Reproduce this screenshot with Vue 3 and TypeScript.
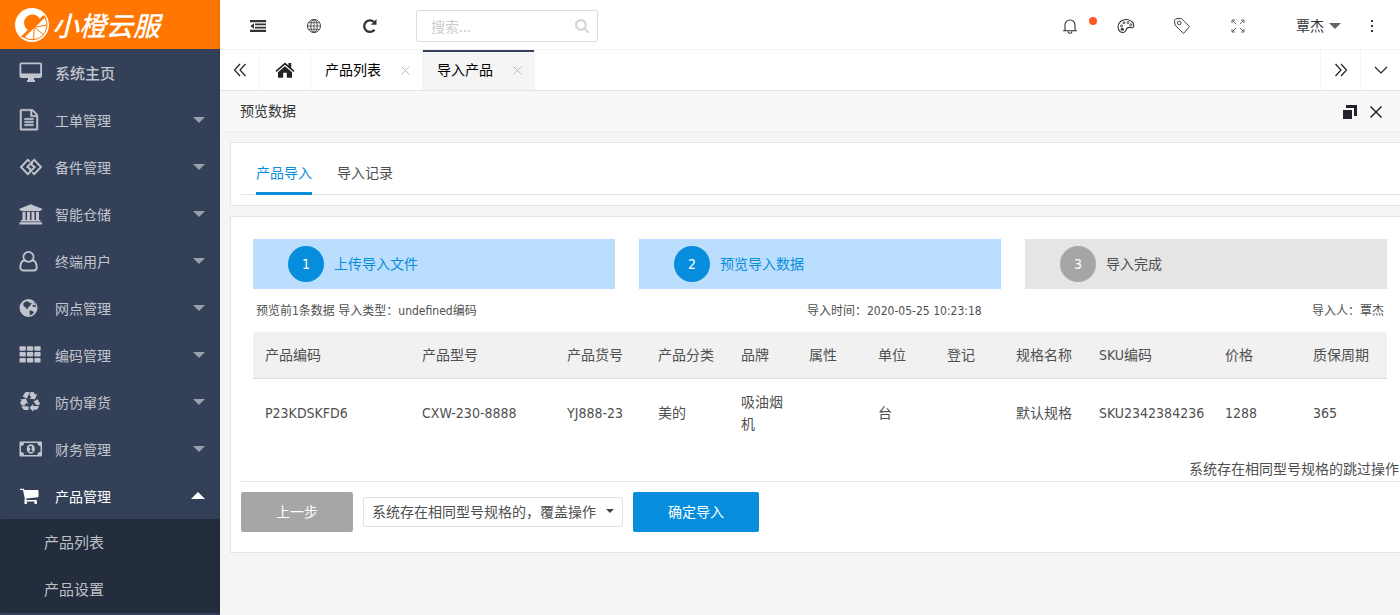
<script setup lang="ts">
import { ref } from 'vue'

interface MenuItem { label: string; icon: string; active?: boolean; plain?: boolean }
interface Column { title: string; width: number; value: string }

const menu: MenuItem[] = [
  { label: '系统主页', icon: 'desktop', plain: true },
  { label: '工单管理', icon: 'file' },
  { label: '备件管理', icon: 'link' },
  { label: '智能仓储', icon: 'bank' },
  { label: '终端用户', icon: 'user' },
  { label: '网点管理', icon: 'globe' },
  { label: '编码管理', icon: 'grid' },
  { label: '防伪窜货', icon: 'recycle' },
  { label: '财务管理', icon: 'money' },
  { label: '产品管理', icon: 'cart', active: true },
]
const submenu = ['产品列表', '产品设置']

const steps = [
  { label: '上传导入文件', done: true },
  { label: '预览导入数据', done: true },
  { label: '导入完成', done: false },
]

const columns: Column[] = [
  { title: '产品编码', width: 157, value: 'P23KDSKFD6' },
  { title: '产品型号', width: 145, value: 'CXW-230-8888' },
  { title: '产品货号', width: 91, value: 'YJ888-23' },
  { title: '产品分类', width: 83, value: '美的' },
  { title: '品牌', width: 68, value: '吸油烟机' },
  { title: '属性', width: 69, value: '' },
  { title: '单位', width: 69, value: '台' },
  { title: '登记', width: 69, value: '' },
  { title: '规格名称', width: 83, value: '默认规格' },
  { title: 'SKU编码', width: 126, value: 'SKU2342384236' },
  { title: '价格', width: 88, value: '1288' },
  { title: '质保周期', width: 86, value: '365' },
]
const totalWidth = columns.reduce((sum, c) => sum + c.width, 0)

const keyword = ref('')
const mode = ref('cover')
</script>

<template>
  <div class="app">
    <aside class="sidebar">
      <a class="logo" href="#" aria-label="小橙云服">
        <svg class="logo-mark" viewBox="0 0 36 36" aria-hidden="true">
          <circle cx="18" cy="18" r="17" fill="#fff" />
          <circle cx="18.500" cy="16" r="8.500" fill="#ff7701" />
          <path d="M29.500 8L32.500 11L11.500 31.500L7 29.500Z" fill="#ff7701" />
          <path d="M30.800 10.200A14.800 14.800 0 0 1 10 30.300Z" fill="#fff" stroke="#ff7701" stroke-width="1" />
          <path d="M20.300 20.200L33 18M20.300 20.200L30 28M20.300 20.200L19.500 33" stroke="#ff7701" stroke-width="1" />
        </svg>
        <span class="logo-text">小橙云服</span>
      </a>
      <nav>
        <ul class="menu">
          <li v-for="item in menu" :key="item.label">
            <a href="#" class="menu-link" :class="{ active: item.active, home: item.plain }">
              <svg class="menu-icon" viewBox="0 0 26 24" fill="currentColor" aria-hidden="true">
                <path v-if="item.icon === 'desktop'" fill-rule="evenodd" d="M3.500 1.500H22a2 2 0 0 1 2 2V15a2 2 0 0 1-2 2H16V19h1V21H9V19h1V17H3.500a2 2 0 0 1-2-2V3.500a2 2 0 0 1 2-2ZM3.300 3.200V12.500H22.200V3.200Z" />
                <g v-else-if="item.icon === 'file'" transform="translate(.5 1.300) scale(.0117)" stroke="currentColor" stroke-width="40">
                  <path d="M1596 380q28 28 48 76t20 88v1152q0 40-28 68t-68 28h-1344q-40 0-68-28t-28-68v-1600q0-40 28-68t68-28h896q40 0 88 20t76 48zm-444-244v376h376q-10-29-22-41l-313-313q-12-12-41-22zm384 1528v-1024h-416q-40 0-68-28t-28-68v-416h-768v1536h1280zm-1024-864q0-14 9-23t23-9h704q14 0 23 9t9 23v64q0 14-9 23t-23 9h-704q-14 0-23-9t-9-23v-64zm736 224q14 0 23 9t9 23v64q0 14-9 23t-23 9h-704q-14 0-23-9t-9-23v-64q0-14 9-23t23-9h704zm0 256q14 0 23 9t9 23v64q0 14-9 23t-23 9h-704q-14 0-23-9t-9-23v-64q0-14 9-23t23-9h704z" />
                </g>
                <g v-else-if="item.icon === 'link'" fill="none" stroke="currentColor" stroke-width="1.900">
                  <path d="M11.800 6.700L9.800 4.900L3 12L9.800 19.100L12.200 16.700V14L9.300 11.800L14.300 7" />
                  <path d="M14.200 17.300L16.200 19.100L23 12L16.200 4.900L13.800 7.300V10L16.700 12.200L12 16.800" />
                </g>
                <g v-else-if="item.icon === 'bank'">
                  <path d="M12.800 2.300L24 6.700V8.200H22.500V9H3V8.200H1.500V6.700Z" />
                  <path d="M4.500 9.700H7.500V18H9V9.700H12V18H13.500V9.700H16.500V18H18V9.700H21V18H22.500V19.500H3V18H4.500ZM1.500 20.300H24V22.500H1.500Z" />
                </g>
                <g v-else-if="item.icon === 'user'" fill="none" stroke="currentColor" stroke-width="1.900">
                  <path d="M6.800 11.300A5 5 0 1 1 14.200 11.300A5.300 5.300 0 0 1 6.800 11.300C3.500 11.800 2.300 14.500 2.300 18.500A3 3 0 0 0 5.300 21.500H15.700A3 3 0 0 0 18.700 18.500C18.700 14.500 17.500 11.800 14.200 11.300" />
                </g>
                <path v-else-if="item.icon === 'globe'" fill-rule="evenodd" d="M10.500 3A9 9 0 1 1 10.500 21A9 9 0 0 1 10.500 3ZM9.500 5L6.500 6.300L5.300 7.500L5.600 10L7.200 11.300L8.600 13L10.500 13.300L9.300 11.800L11.300 10.700L12.600 9L13.700 7.600L12.800 6.500L11.800 7.300L11 6.200ZM12.200 14.500L11.200 15.500L11.800 17L11.500 19.200L14 18.400L16 16.400L14.500 15.100ZM14.800 5.500L17.400 8.500L16.700 9.600L15.500 8.700L14.300 9.500L15 10.800L17.800 11L17.800 9L16.500 6.500Z" />
                <g v-else-if="item.icon === 'grid'">
                  <template v-for="row in 3" :key="row">
                    <rect v-for="col in 3" :key="col" :x="1.5 + (col - 1) * 7.4" :y="3.3 + (row - 1) * 5.8" width="6.300" height="4.500" rx="1" />
                  </template>
                </g>
                <g v-else-if="item.icon === 'recycle'">
                  <path d="M8 2H11.800L10 6.300L8.800 8.800L4.700 6.500L6.700 3Z" />
                  <path d="M12.800 2H15.500L17.500 4.700L19.500 3.600L17 9.200L11.200 8.700L13.200 7.500L11.300 4.500Z" />
                  <path d="M15.500 11.500L19.600 9.200L22 13.500L21.200 15L18.300 14.900Z" />
                  <path d="M11.500 17.700L15.200 13.800V15.900H21.200L19 19.800H15.200V21.800Z" />
                  <path d="M2 9.500L7.900 8.800L10.200 14L8.200 12.900L6.300 15.800L3.700 15.300L2 12.500L3.700 10.600Z" />
                  <path d="M3.300 16.300H10.500V20H5.800Z" />
                </g>
                <path v-else-if="item.icon === 'money'" fill-rule="evenodd" d="M2.500 4.500H23a1 1 0 0 1 1 1V18.500a1 1 0 0 1-1 1H2.500a1 1 0 0 1-1-1V5.500a1 1 0 0 1 1-1ZM6 6A3 3 0 0 1 3 9V15A3 3 0 0 1 6 18H19.500A3 3 0 0 1 22.500 15V9A3 3 0 0 1 19.500 6ZM12.800 7.300C15.300 7.300 16.800 9.300 16.800 12S15.300 16.700 12.800 16.700S8.800 14.700 8.800 12S10.300 7.300 12.800 7.300ZM12.300 9L10.800 10.300L11.500 11.100L12.200 10.600V13.800H11.200V15H14.700V13.800H13.700V9Z" />
                <g v-else transform="translate(1.300 1.800) scale(.0111)">
                  <path d="M704 1536q0 52-38 90t-90 38-90-38-38-90 38-90 90-38 90 38 38 90zm896 0q0 52-38 90t-90 38-90-38-38-90 38-90 90-38 90 38 38 90zm128-1088v512q0 24-16.500 42.500t-40.500 21.500l-1044 122q13 60 13 70 0 16-24 64h920q26 0 45 19t19 45-19 45-45 19h-1024q-26 0-45-19t-19-45q0-11 8-31.500t16-36 21.500-40 15.500-29.500l-177-823h-204q-26 0-45-19t-19-45 19-45 45-19h256q16 0 28.500 6.500t19.500 15.500 13 24.500 8 26 5.500 29.500 4.500 26h1201q26 0 45 19t19 45z" />
                </g>
              </svg>
              <span class="menu-label">{{ item.label }}</span>
              <i v-if="!item.plain" class="caret" :class="{ up: item.active }"></i>
            </a>
            <ul v-if="item.active" class="submenu">
              <li v-for="sub in submenu" :key="sub"><a href="#">{{ sub }}</a></li>
            </ul>
          </li>
        </ul>
      </nav>
    </aside>

    <div class="main">
      <header class="topbar">
        <button class="tool" type="button" aria-label="收起菜单">
          <svg width="18" height="16" viewBox="0 0 18 16" fill="#333"><path d="M1 2H17V4.200H1ZM6 5.500H17V7.300H6ZM6 8.700H17V10.500H6ZM1 11.800H17V14H1ZM5 5.200V10.800L1.300 8Z" /></svg>
        </button>
        <button class="tool" type="button" aria-label="网站">
          <svg width="16" height="16" viewBox="0 0 16 16" fill="none" stroke="#444"><circle cx="8" cy="8" r="6.500" /><ellipse cx="8" cy="8" rx="3.200" ry="6.500" /><path d="M8 1.500V14.500M1.500 8H14.500M2.500 4.700H13.500M2.500 11.300H13.500" stroke-width=".8" /></svg>
        </button>
        <button class="tool" type="button" aria-label="刷新">
          <svg width="16" height="16" viewBox="0 0 16 16"><path d="M12.500 11.800A5.800 5.800 0 1 1 11.800 3.800" fill="none" stroke="#333" stroke-width="2.300" /><path d="M14.500 1V6.800H8.800Z" fill="#333" /></svg>
        </button>
        <label class="search">
          <input v-model="keyword" type="text" placeholder="搜索..." aria-label="搜索" />
          <svg width="14" height="14" viewBox="64 128 1664 1664" fill="#d5d5d5" aria-hidden="true"><path d="M1216 832q0-185-131.500-316.500t-316.500-131.500-316.500 131.500-131.500 316.500 131.500 316.500 316.500 131.500 316.500-131.500 131.500-316.500zm512 832q0 52-38 90t-90 38q-54 0-90-38l-343-342q-179 124-399 124-143 0-273.500-55.500t-225-150-150-225-55.500-273.500 55.500-273.500 150-225 225-150 273.500-55.500 273.500 55.500 225 150 150 225 55.500 273.500q0 220-124 399l343 343q37 37 37 90z" /></svg>
        </label>
        <div class="topbar-right">
          <button class="tool" type="button" aria-label="消息">
            <svg width="16" height="16" viewBox="0 0 16 16" fill="none" stroke="#333"><path d="M3 12.500V7A5 5 0 0 1 13 7V12.500M1 12.700H15M6 13.500A2 1.800 0 0 0 10 13.500" stroke-width="1.100" /></svg>
            <i class="dot"></i>
          </button>
          <button class="tool" type="button" aria-label="主题">
            <svg width="18" height="16" viewBox="0 0 18 16" fill="none" stroke="#333"><path d="M3.300 13.800C0 11 .3 6 3.800 3.300C7.500.5 13 1.200 15.500 4.200C17.500 6.800 17 10 15 9.800C13 9.200 11.500 9 10.300 10C9 11.300 9 14.300 6.500 14.500C5 14.600 4 14.300 3.300 13.800Z" stroke-width="1.100" /><g stroke-width=".9"><circle cx="4.500" cy="8" r="1" /><circle cx="7" cy="4.800" r="1" /><circle cx="11" cy="4.500" r="1" /><circle cx="13.800" cy="6.900" r="1" /></g><circle cx="5.300" cy="11.300" r="1.500" fill="#333" stroke="none" /></svg>
          </button>
          <button class="tool" type="button" aria-label="便签">
            <svg width="18" height="18" viewBox="0 0 18 18" fill="none" stroke="#444"><path d="M1.500 3.200L2.800 1.700L8.300 1.500L16.500 9.500L10.500 16.500L2 8Z" stroke-width="1" stroke-linejoin="round" /><circle cx="6.300" cy="6" r="1.800" /></svg>
          </button>
          <button class="tool" type="button" aria-label="全屏">
            <svg width="14" height="14" viewBox="0 0 14 14" fill="none" stroke="#666"><path d="M1 4V1H4M1 1L5 5M10 1H13V4M13 1L9 5M1 10V13H4M1 13L5 9M13 10V13H10M13 13L9 9" stroke-width="1" /></svg>
          </button>
          <button class="user" type="button">覃杰<i class="user-caret"></i></button>
          <button class="more" type="button" aria-label="更多"><svg width="4" height="14" viewBox="0 0 4 14" fill="#333"><path d="M1 1H3V3H1ZM1 6H3V8H1ZM1 11H3V13H1Z" /></svg></button>
        </div>
      </header>

      <div class="tabs">
        <button class="tab-tool left" type="button" aria-label="向左"><svg width="14" height="14" viewBox="0 0 14 14"><path d="M7 1L1.500 7L7 13M12.500 1L7 7L12.500 13" /></svg></button>
        <a class="tab home-tab" href="#" aria-label="首页"><svg width="20" height="16" viewBox="0 0 20 16" fill="#222"><path d="M10 .5L13.500 3.500V1H16.200V6L19.500 8.800L18.500 10L10 2.700L1.500 10L.5 8.800ZM10 4.300L17 10.300V15.800H11.800V10.800H8.200V15.800H3V10.300Z" /></svg></a>
        <a class="tab" href="#">产品列表<svg width="9" height="9" viewBox="0 0 9 9"><path d="M.5.5L8.500 8.500M8.500.5L.5 8.500" /></svg></a>
        <a class="tab current" href="#">导入产品<svg width="9" height="9" viewBox="0 0 9 9"><path d="M.5.5L8.500 8.500M8.500.5L.5 8.500" /></svg></a>
        <span class="spacer"></span>
        <button class="tab-tool" type="button" aria-label="向右"><svg width="14" height="14" viewBox="0 0 14 14"><path d="M1.500 1L7 7L1.500 13M7 1L12.500 7L7 13" /></svg></button>
        <button class="tab-tool" type="button" aria-label="展开"><svg width="14" height="14" viewBox="0 0 14 14"><path d="M1 4L7 10L13 4" /></svg></button>
      </div>

      <div class="title-bar">
        <h1>预览数据</h1>
        <button type="button" aria-label="还原"><svg width="14" height="14" viewBox="0 0 14 14" fill="#25222f"><path d="M0 5H9V14H0ZM3 0H14V11H11V3H3Z" /></svg></button>
        <button type="button" aria-label="关闭"><svg width="12" height="12" viewBox="0 0 12 12" fill="none" stroke="#25222f" stroke-width="1.500"><path d="M.5.500L11.500 11.500M11.500.5L.5 11.500" /></svg></button>
      </div>

      <main class="content">
        <section class="card nav-card">
          <div class="sub-tabs">
            <a href="#" class="on">产品导入</a>
            <a href="#">导入记录</a>
          </div>
        </section>

        <section class="card">
          <div class="inner">
            <ol class="steps">
              <li v-for="(step, i) in steps" :key="step.label" :class="{ done: step.done }">
                <span class="num">{{ i + 1 }}</span>{{ step.label }}
              </li>
            </ol>
            <div class="info">
              <span>预览前1条数据 导入类型：undefined编码</span>
              <span>导入时间：2020-05-25 10:23:18</span>
              <span>导入人：覃杰</span>
            </div>
            <table>
              <colgroup>
                <col v-for="c in columns" :key="c.title" :style="{ width: (c.width / totalWidth) * 100 + '%' }" />
              </colgroup>
              <thead>
                <tr><th v-for="c in columns" :key="c.title" scope="col">{{ c.title }}</th></tr>
              </thead>
              <tbody>
                <tr><td v-for="c in columns" :key="c.title">{{ c.value }}</td></tr>
              </tbody>
            </table>
          </div>
          <p class="hint">系统存在相同型号规格的跳过操作</p>
          <div class="actions">
            <button class="btn back" type="button">上一步</button>
            <div class="select">
              <select v-model="mode" aria-label="导入方式">
                <option value="cover">系统存在相同型号规格的，覆盖操作</option>
                <option value="skip">系统存在相同型号规格的跳过操作</option>
              </select>
            </div>
            <button class="btn confirm" type="button">确定导入</button>
          </div>
        </section>
      </main>
    </div>
  </div>
</template>

<style>
body { margin: 0; }
</style>

<style scoped>
.app {
  display: flex;
  min-height: 100vh;
  overflow: hidden;
  background: #f5f5f5;
  color: #4f4f4f;
  font: 14px/22px "DejaVu Sans Condensed", "Noto Sans CJK SC", sans-serif;
}
.app * { box-sizing: border-box; }
a { color: inherit; text-decoration: none; }
ul, ol { list-style: none; margin: 0; padding: 0; }
button {
  border: 0;
  padding: 0;
  background: none;
  color: inherit;
  font: inherit;
  display: flex;
  align-items: center;
  justify-content: center;
  cursor: pointer;
}
svg { display: block; flex: none; }

.sidebar { width: 220px; flex: none; background: #344058; color: #c2c5cd; }
.logo { display: flex; align-items: center; height: 49px; padding-left: 14px; gap: 2px; background: #ff7701; color: #fff; }
.logo-mark { width: 36px; height: 36px; }
.logo-text { font: italic 500 27px/47px "Noto Sans CJK SC", sans-serif; }
.menu-link { display: flex; align-items: center; height: 47px; padding: 0 15px 0 18px; }
.menu-icon { width: 26px; height: 24px; margin-right: 11px; }
.menu-label { flex: 1; padding-top: 2px; }
.home { font-size: 15px; font-weight: 500; }
.active { color: #fff; }
.caret { border: 6px solid transparent; border-top-color: #9aa0ac; border-bottom: 0; }
.caret.up { border: 7px solid transparent; border-bottom-color: #fff; border-top: 0; }
.submenu { background: #242d3d; border-radius: 2px; font-size: 15px; color: #bdc0c5; }
.submenu a { display: block; height: 47px; line-height: 49px; padding-left: 44px; }

.main { flex: 1; min-width: 0; display: flex; flex-direction: column; box-shadow: 0 0 4px rgba(0, 0, 0, .15); }
.topbar { display: flex; align-items: center; height: 50px; padding: 2px 8px 0 10px; background: #fff; border-bottom: 1px solid #f3f3f3; color: #333; }
.tool { position: relative; width: 56px; height: 48px; }
.dot { position: absolute; right: 1px; top: 15px; width: 8px; height: 8px; border-radius: 50%; background: #ff5722; }
.search { display: flex; align-items: center; width: 182px; height: 32px; margin-left: 18px; padding: 0 8px 0 14px; border: 1px solid #ddd; border-radius: 2px; }
.search input { flex: 1; min-width: 0; border: 0; padding: 0; outline: 0; background: none; font: 14px/22px "Noto Sans CJK SC", sans-serif; color: #333; }
.search input::placeholder { color: #ccc; }
.topbar-right { display: flex; margin-left: auto; align-items: center; }
.user { padding: 0 0 0 30px; gap: 5px; }
.user-caret { border: 6px solid transparent; border-top-color: #666; border-bottom: 0; }
.more { width: 40px; height: 48px; margin-left: 11px; }

.tabs { display: flex; height: 41px; background: #fff; border-bottom: 1px solid #e3e3e3; color: #000; }
.tab-tool { width: 40px; border-left: 1px solid #f3f3f3; }
.tab-tool.left { border-left: 0; border-right: 1px solid #f3f3f3; }
.tab-tool path { fill: none; stroke: #222; stroke-width: 1.2; }
.tab { display: flex; align-items: center; gap: 20px; width: 112px; padding-left: 14px; border-right: 1px solid #f3f3f3; }
.tab path { stroke: #bbb; }
.home-tab { width: 51px; padding: 0; justify-content: center; }
.home-tab path { stroke: none; }
.current { background: #f5f5f5; box-shadow: inset 0 2px #344058; }
.spacer { flex: 1; }

.title-bar { display: flex; align-items: center; gap: 13px; height: 41px; padding: 0 18px 0 20px; background: #f8f8f8; border-bottom: 1px solid #eee; color: #333; }
.title-bar button { padding-top: 2px; }
h1 { flex: 1; margin: 0; font-size: 14px; font-weight: 400; }

.content { padding: 10px 0 0 10px; }
.card { margin-bottom: 10px; padding-left: 10px; background: #fff; border: 1px solid #e4e4e4; border-right: 0; }
.nav-card { padding-bottom: 10px; }
.sub-tabs { display: flex; gap: 25px; height: 52px; padding: 0 15px; border-bottom: 1px solid #e4e4e4; }
.sub-tabs a { height: 52px; line-height: 60px; border-bottom: 3px solid transparent; }
.sub-tabs .on { color: #068ddb; border-color: #068ddb; }

.inner { padding: 22px 13px 0 12px; }
.steps { display: grid; grid-template-columns: repeat(3, 1fr); gap: 24px; }
.steps li { display: flex; align-items: center; gap: 10px; height: 50px; padding-left: 35px; background: #e5e5e5; }
.steps .done { background: #bbdeff; color: #068ddb; }
.num { width: 36px; height: 36px; border-radius: 50%; background: #a6a6a6; color: #fff; text-align: center; line-height: 36px; }
.done .num { background: #068ddb; }
.info { display: flex; justify-content: space-between; height: 43px; padding: 0 3px; font-size: 12px; line-height: 45px; }
table { width: 100%; table-layout: fixed; border-collapse: collapse; }
th, td { padding: 12px; text-align: left; font-weight: 400; }
th { background: #f1f1f1; border-bottom: 1px solid #ddd; white-space: nowrap; }
.hint { margin: 11px 0 0; padding-right: 1px; text-align: right; line-height: 23px; }
.actions { display: flex; align-items: center; gap: 10px; padding: 10px 0 20px; border-top: 1px solid #e4e4e4; }
.btn { height: 40px; border-radius: 2px; color: #fff; }
.back { width: 112px; background: #a6a6a6; }
.confirm { width: 126px; background: #068ddb; }
.select { position: relative; }
.select::after { content: ""; position: absolute; right: 9px; top: 12px; border: 4px solid transparent; border-top-color: #444; border-bottom: 0; pointer-events: none; }
select { appearance: none; display: block; width: 260px; height: 30px; padding: 0 8px; border: 1px solid #e2e2e2; border-radius: 2px; background: #fff; color: inherit; font: inherit; }
</style>
